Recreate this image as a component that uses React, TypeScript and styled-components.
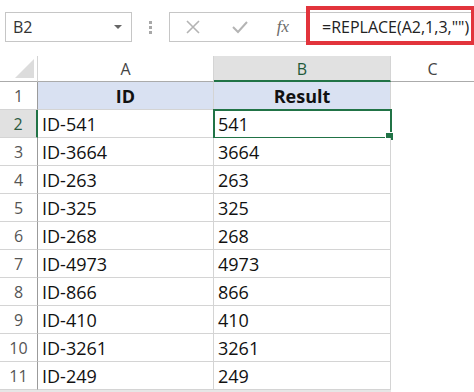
import React from 'react';
import styled, { createGlobalStyle } from 'styled-components';

const data = [
    ['ID-541', '541'],
    ['ID-3664', '3664'],
    ['ID-263', '263'],
    ['ID-325', '325'],
    ['ID-268', '268'],
    ['ID-4973', '4973'],
    ['ID-866', '866'],
    ['ID-410', '410'],
    ['ID-3261', '3261'],
    ['ID-249', '249'],
]

const App = () => {
    return <Page>
        <GlobalStyle />
        <FormulaBar>
            <NameBox>
                <span>B2</span>
                <DropArrow />
            </NameBox>
            <Grip>
                <i /><i /><i />
            </Grip>
            <FormulaGroup>
                <ToolButton>
                    <svg width="16" height="14" viewBox="0 0 16 14">
                        <path d="M2 1 L14 13 M14 1 L2 13" stroke="#b4b4b4" strokeWidth="1.6" fill="none" />
                    </svg>
                </ToolButton>
                <ToolButton>
                    <svg width="16" height="14" viewBox="0 0 16 14">
                        <path d="M1 7 L6 12 L15 2" stroke="#b4b4b4" strokeWidth="2" fill="none" />
                    </svg>
                </ToolButton>
                <FxButton>fx</FxButton>
                <FormulaInput>
                    =REPLACE(A2,1,3,"")
                    <Highlight />
                </FormulaInput>
            </FormulaGroup>
        </FormulaBar>
        <Sheet>
            <Corner><Triangle /></Corner>
            <ColHeader>A</ColHeader>
            <ColHeader selected>B</ColHeader>
            <ColHeader last>C</ColHeader>

            <RowHeader>1</RowHeader>
            <Cell head>ID</Cell>
            <Cell head>Result</Cell>
            <Blank />

            {data.map((r, i) => <React.Fragment key={i}>
                <RowHeader selected={i === 0}>{i + 2}</RowHeader>
                <Cell>{r[0]}</Cell>
                <Cell selected={i === 0}>{r[1]}</Cell>
                <Blank />
            </React.Fragment>)}

            <EdgeRow />
        </Sheet>
    </Page>
}

export default App

const GlobalStyle = createGlobalStyle`
    html, body {
        margin: 0;
        padding: 0;
        background: #fff;
        overflow: hidden;
    }
    body {
        font-family: "Open Sans", "Liberation Sans", sans-serif;
    }
`
const Page = styled.div`
    width: 474px;
    height: 392px;
    overflow: hidden;
    background: #fff;
`
const FormulaBar = styled.div`
    display: flex;
    align-items: center;
    height: 56px;
    padding: 0 0 0 5px;
    box-sizing: border-box;
`
const NameBox = styled.div`
    display: flex;
    align-items: center;
    justify-content: space-between;
    width: 127px;
    height: 30px;
    box-sizing: border-box;
    border: 1px solid #c6c6c6;
    padding: 0 9px 0 7px;
    font-size: 16px;
    color: #333;
    margin-top: -2px;
`
const DropArrow = styled.div`
    width: 0;
    height: 0;
    border-left: 4px solid transparent;
    border-right: 4px solid transparent;
    border-top: 4px solid #666;
`
const Grip = styled.div`
    width: 37px;
    display: flex;
    flex-direction: column;
    align-items: center;
    gap: 2px;
    margin-top: -2px;
    i {
        width: 3px;
        height: 3px;
        background: #a8a8a8;
    }
`
const FormulaGroup = styled.div`
    flex: 1;
    display: flex;
    align-items: center;
    height: 30px;
    box-sizing: border-box;
    border: 1px solid #c6c6c6;
    border-right: none;
    margin-top: -2px;
`
const ToolButton = styled.div`
    width: 48px;
    display: flex;
    justify-content: center;
    align-items: center;
    &:first-child {
        width: 46px;
    }
`
const FxButton = styled.div`
    width: 42px;
    text-align: center;
    font-family: "Liberation Serif", serif;
    font-style: italic;
    font-size: 17px;
    color: #6a6a6a;
    padding-right: 4px;
    box-sizing: border-box;
`
const FormulaInput = styled.div`
    position: relative;
    flex: 1;
    height: 100%;
    display: flex;
    align-items: center;
    padding-left: 16px;
    font-size: 16px;
    color: #222;
    white-space: nowrap;
`
const Highlight = styled.div`
    position: absolute;
    left: 0;
    right: 0;
    top: -7px;
    bottom: -4px;
    border: 4px solid #e2343c;
    border-right-width: 3px;
`
const Sheet = styled.div`
    display: grid;
    grid-template-columns: 38px 176px 177px 1fr;
    grid-template-rows: 26px;
    grid-auto-rows: 28px;
    font-family: "Open Sans", "Liberation Sans", sans-serif;
`
const Corner = styled.div`
    position: relative;
    border-right: 1px solid #d4d4d4;
    border-bottom: 1px solid #ababab;
`
const Triangle = styled.div`
    position: absolute;
    right: 3px;
    bottom: 3px;
    width: 0;
    height: 0;
    border-left: 19px solid transparent;
    border-bottom: 19px solid #dcdcdc;
`
const ColHeader = styled.div<{ selected?: boolean, last?: boolean }>`
    display: flex;
    align-items: center;
    justify-content: center;
    font-size: 16px;
    color: ${p => p.selected ? '#1f5a3a' : '#444'};
    background: ${p => p.selected ? '#e1e1e1' : '#fff'};
    border-right: ${p => p.last ? 'none' : '1px solid #d4d4d4'};
    border-bottom: ${p => p.selected ? '2px solid #217346' : '1px solid #ababab'};
    box-sizing: border-box;
    padding-top: ${p => p.selected ? '1px' : '0'};
`
const RowHeader = styled.div<{ selected?: boolean }>`
    display: flex;
    align-items: center;
    justify-content: center;
    font-size: 16px;
    color: ${p => p.selected ? '#2b5a40' : '#555'};
    background: ${p => p.selected ? '#e1e1e1' : '#fff'};
    border-right: ${p => p.selected ? '2px solid #217346' : '1px solid #9b9b9b'};
    border-bottom: 1px solid #d4d4d4;
    box-sizing: border-box;
`
const Cell = styled.div<{ head?: boolean, selected?: boolean }>`
    position: relative;
    display: flex;
    align-items: center;
    justify-content: ${p => p.head ? 'center' : 'flex-start'};
    padding-left: ${p => p.head ? '0' : '4px'};
    font-size: 18px;
    font-weight: ${p => p.head ? 700 : 400};
    color: #111;
    background: ${p => p.head ? '#d9e1f2' : '#fff'};
    border-right: 1px solid #d4d4d4;
    border-bottom: 1px solid #d4d4d4;
    box-sizing: border-box;
    ${p => p.selected && `
        outline: 2px solid #217346;
        outline-offset: -1px;
        &::after {
            content: '';
            position: absolute;
            right: -4px;
            bottom: -4px;
            width: 7px;
            height: 7px;
            background: #217346;
            border: 1px solid #fff;
        }
    `}
`
const Blank = styled.div`
    background: #fff;
`
const EdgeRow = styled.div`
    grid-column: 1 / 4;
    background: #e6e6e6;
`
